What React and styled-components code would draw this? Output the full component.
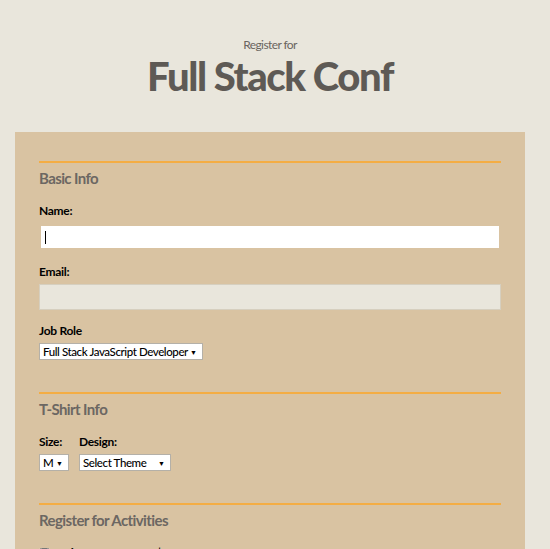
import React from "react";
import styled, { createGlobalStyle } from "styled-components";

const GlobalStyle = createGlobalStyle`
  body {
    margin: 0;
    background-color: #e9e6dc;
    font-family: Lato, "Liberation Sans", sans-serif;
    color: #000000;
  }
`;

const Page = styled.div`
  padding: 38px 25px 0 15px;
`;

const Header = styled.header`
  text-align: center;
  margin-bottom: 36px;
`;

const Kicker = styled.div`
  font-size: 12px;
  line-height: 14px;
  color: #6a655f;
  letter-spacing: -0.6px;
`;

const Title = styled.h1`
  margin: 4px 0 0;
  font-size: 40px;
  line-height: 40px;
  font-weight: 900;
  letter-spacing: -1.4px;
  color: #5e5a55;
`;

const Card = styled.form`
  background-color: #d9c3a2;
  padding: 29px 24px 40px;
`;

const Fieldset = styled.section`
  border-top: 2px solid #f4ad44;
  padding: 5px 0 32px;
`;

const Legend = styled.h2`
  margin: 0 0 16px;
  font-size: 15px;
  line-height: 20px;
  font-weight: 700;
  letter-spacing: -0.6px;
  color: #6c6762;
`;

const Label = styled.label`
  display: block;
  font-size: 12px;
  line-height: 14px;
  font-weight: 700;
  letter-spacing: -0.3px;
  margin-bottom: ${(p) => p.$gap || 6}px;
`;

const Field = styled.div`
  position: relative;
  margin-bottom: ${(p) => p.$after || 14}px;
`;

const TextInput = styled.input`
  display: block;
  box-sizing: border-box;
  width: 100%;
  height: 26px;
  margin: 0;
  padding: 0 4px;
  border: ${(p) => (p.$focused ? "2px solid #d9c3a2" : "1px solid #d6cfbf")};
  background-color: ${(p) => (p.$focused ? "#ffffff" : "#e9e6dc")};
  outline: none;
  font-family: inherit;
  font-size: 12px;
  caret-color: transparent;
`;

const Caret = styled.span`
  position: absolute;
  left: 6px;
  top: 7px;
  width: 1px;
  height: 13px;
  background-color: #000000;
`;

const SelectBox = styled.div`
  position: relative;
  width: ${(p) => p.$width}px;

  &::after {
    content: "▼";
    position: absolute;
    right: 6px;
    top: 5px;
    font-size: 7px;
    line-height: 8px;
    pointer-events: none;
  }
`;

const Select = styled.select`
  display: block;
  box-sizing: border-box;
  width: 100%;
  height: 17px;
  margin: 0;
  padding: 0 0 0 3px;
  appearance: none;
  border: 1px solid #b4b0a8;
  border-radius: 0;
  background-color: #ffffff;
  font-family: inherit;
  font-size: 11.5px;
  font-weight: 500;
  letter-spacing: -0.4px;
  color: #000000;
`;

const Row = styled.div`
  display: flex;
  gap: 10px;
`;

const Column = styled.div`
  display: flex;
  flex-direction: column;
`;

const CheckRow = styled.label`
  display: flex;
  align-items: center;
  gap: 4px;
  font-size: 12px;
  line-height: 14px;
  font-weight: 700;
  letter-spacing: -0.3px;

  input {
    margin: 0;
    width: 11px;
    height: 11px;
  }
`;

const App = () => {
  return (
    <>
      <GlobalStyle />
      <Page>
        <Header>
          <Kicker>Register for</Kicker>
          <Title>Full Stack Conf</Title>
        </Header>
        <Card>
          <Fieldset>
            <Legend>Basic Info</Legend>
            <Label htmlFor="name">Name:</Label>
            <Field $after={15}>
              <TextInput id="name" type="text" $focused />
              <Caret />
            </Field>
            <Label htmlFor="mail" $gap={5}>Email:</Label>
            <Field $after={14}>
              <TextInput id="mail" type="email" />
            </Field>
            <Label htmlFor="title" $gap={5}>Job Role</Label>
            <SelectBox $width={164}>
              <Select id="title" defaultValue="full-stack">
                <option value="full-stack">Full Stack JavaScript Developer</option>
                <option value="front-end">Front End Developer</option>
                <option value="back-end">Back End Developer</option>
              </Select>
            </SelectBox>
          </Fieldset>
          <Fieldset>
            <Legend>T-Shirt Info</Legend>
            <Row>
              <Column>
                <Label htmlFor="size" $gap={5}>Size:</Label>
                <SelectBox $width={30}>
                  <Select id="size" defaultValue="medium">
                    <option value="small">S</option>
                    <option value="medium">M</option>
                    <option value="large">L</option>
                  </Select>
                </SelectBox>
              </Column>
              <Column>
                <Label htmlFor="design" $gap={5}>Design:</Label>
                <SelectBox $width={92}>
                  <Select id="design" defaultValue="none">
                    <option value="none">Select Theme</option>
                    <option value="js puns">Theme - JS Puns</option>
                    <option value="heart js">Theme - I ♥ JS</option>
                  </Select>
                </SelectBox>
              </Column>
            </Row>
          </Fieldset>
          <Fieldset>
            <Legend>Register for Activities</Legend>
            <CheckRow>
              <input type="checkbox" /> Main Conference — $200
            </CheckRow>
          </Fieldset>
        </Card>
      </Page>
    </>
  );
};

export default App;
